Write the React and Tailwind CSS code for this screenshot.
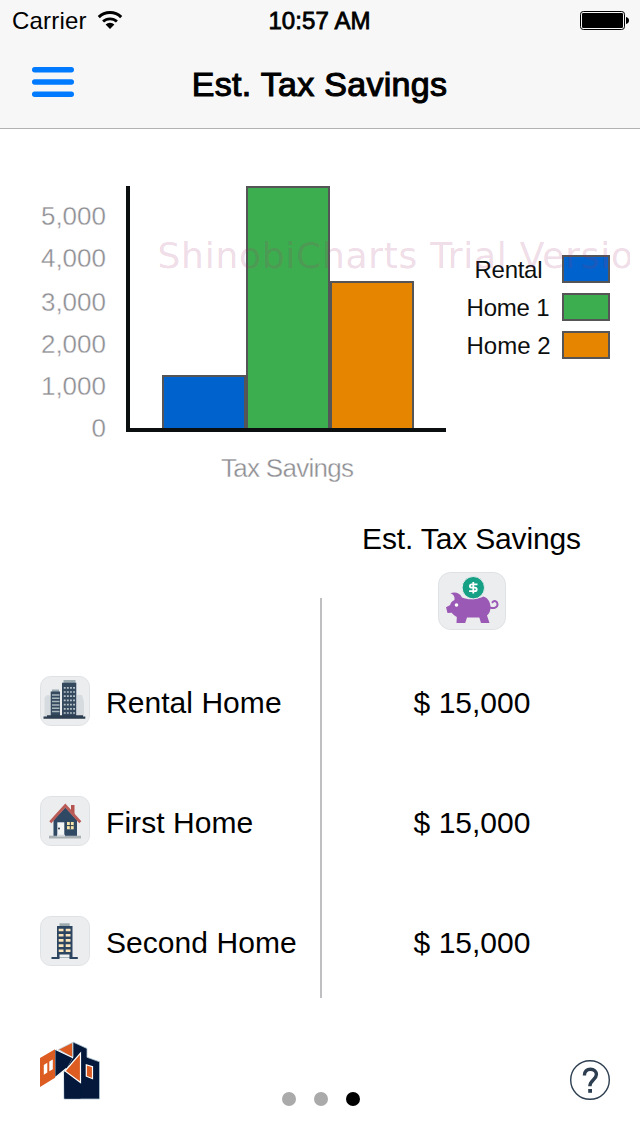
const series = [
  { name: 'Rental', fill: '#0062cc', x: 163, top: 376, legendX: 475, legendW: 68 },
  { name: 'Home 1', fill: '#3dae4f', x: 247, top: 187, legendX: 467, legendW: 83 },
  { name: 'Home 2', fill: '#e68600', x: 331, top: 282, legendX: 467, legendW: 84 },
];

const ticks = [
  ['5,000', 225],
  ['4,000', 267],
  ['3,000', 311],
  ['2,000', 353],
  ['1,000', 395],
  ['0', 437],
];

function WifiIcon() {
  return (
    <svg className="ml-[10px] mt-[10px] h-[20px] w-[26px]" viewBox="0 0 26 20" fill="none" stroke="#000" strokeWidth="3">
      <path d="M1.8 7.1a16 16 0 0 1 22.4 0" />
      <path d="M6.1 11.6a9.9 9.9 0 0 1 13.8 0" strokeWidth="2.8" />
      <path d="M8.6 14.6a6.3 6.3 0 0 1 8.8 0L13 19.1z" fill="#000" stroke="none" />
    </svg>
  );
}

function BatteryIcon() {
  return (
    <svg className="mt-[11px] h-[19px] w-[49px]" viewBox="0 0 49 19">
      <rect x="0.5" y="0.5" width="44" height="18" rx="2.8" fill="none" stroke="#000" />
      <rect x="2" y="2" width="41" height="15" rx="1.2" />
      <path d="M46 6c2 .3 3 1.600 3 3.500s-1 3.200-3 3.500z" />
    </svg>
  );
}

function MenuIcon() {
  return (
    <svg className="h-[31px] w-[42px]" viewBox="0 0 42 31" fill="#007aff">
      <rect y="0" width="42" height="5.500" rx="2.700" />
      <rect y="12.200" width="42" height="5.500" rx="2.700" />
      <rect y="24.500" width="42" height="5.500" rx="2.700" />
    </svg>
  );
}

function Chart() {
  return (
    <svg className="block h-[371px] w-[640px]" viewBox="0 129 640 371">
      <g fill="#8e8e93" stroke="#fff" strokeWidth="0.35" fontSize="26">
        {ticks.map(([label, y]) => (
          <text key={label} x="106" y={y} textAnchor="end">{label}</text>
        ))}
        <text x="221" y="477" textLength="133">Tax Savings</text>
      </g>
      {series.map((s) => (
        <rect key={s.name} x={s.x} y={s.top} width="82" height={430 - s.top} fill={s.fill} stroke="#555557" strokeWidth="2" />
      ))}
      <path d="M128 186v244h318" fill="none" stroke="#0c0f0f" strokeWidth="4" />
      {series.map((s, i) => (
        <g key={s.name}>
          <text x={s.legendX - 0.5} y={278 + i * 38} fontSize="24" fill="#0c0f0f" textLength={s.legendW}>{s.name}</text>
          <rect x="563" y={256 + i * 38} width="46" height="26" fill={s.fill} stroke="#555557" strokeWidth="2" />
        </g>
      ))}
      <clipPath id="watermark"><rect x="150" y="230" width="480" height="60" /></clipPath>
      <g clipPath="url(#watermark)">
        <text x="157.500" y="268" fontSize="36" fill="#a02f70" fillOpacity="0.18" style={{ fontFamily: '"DejaVu Sans", sans-serif' }} textLength="499">ShinobiCharts Trial Version</text>
      </g>
    </svg>
  );
}

function PiggyIcon() {
  return (
    <svg className="h-[58px] w-[68px]" viewBox="0 0 68 58">
      <rect x="0.500" y="0.500" width="67" height="57" rx="12" fill="#ebedef" stroke="#dfe2e4" />
      <path d="M12.500 21.300C17 19.500 22 21 24 25.500C31 28.500 39 27.500 45.500 24.500C50 26 52.500 30 52.500 35.500C52.500 39 51 42 49 43.500L51.500 51H43L41.300 45.500H29L27.200 51H18.500L18.800 45C16.500 44 15 42.500 13.800 40.800L9.500 41L8 35.200L12.200 33C12.500 31 13.700 29.300 16.500 28C17 24.500 15.500 22.500 12.500 21.300z" fill="#9b59b6" />
      <path d="M52 35.500c4 1.500 7.500 0 7.500-3.200s-3.500-4.300-5-2" fill="none" stroke="#9b59b6" strokeWidth="2" strokeLinecap="round" />
      <circle cx="18.500" cy="33" r="1.800" fill="#fff" />
      <circle cx="35.300" cy="15.700" r="11.200" fill="#16a085" stroke="#ebedef" />
      <path d="M39.500 12.300h-5.700q-1.900 0-1.900 1.700t1.900 1.700h3q1.900 0 1.900 1.700t-1.900 1.700h-5.700M35.300 10v11.500" fill="none" stroke="#fff" strokeWidth="1.800" />
    </svg>
  );
}

function TowersIcon() {
  return (
    <>
      <path d="M4.500 22q2-5 6 -2v21H4.500zM37 19h5l2 7v14h-7z" fill="#d6dbdf" />
      <path d="M12 13.500h7V16h-7zM23.500 4H35.500v3h-12z" fill="#9aaab0" />
      <path d="M10.700 15.500h9.300V41h-9.300zM22 6.700h14.300V41H22z" fill="#34495e" />
      <path d="M12 19h7.500M12 22.300h7.500M12 25.600h7.500M12 28.900h7.500M12 32.200h7.500M12 35.500h7.500" stroke="#a9b7bd" strokeWidth="1.500" />
      <path d="M23.800 11.800h11.500M23.800 16h11.500M23.800 20.200h11.500M23.800 24.400h11.500M23.800 28.600h11.500M23.800 32.800h11.500M23.800 37h11.500" stroke="#b4c0c6" strokeWidth="1.700" strokeDasharray="1.900 1.200" />
      <path d="M7 39.200h36v1.300h2.300v2.200H3.500v-2.200H7z" fill="#2c3e50" />
    </>
  );
}

function HouseIcon() {
  return (
    <>
      <path d="M31 9h3.500v10L31 16z" fill="#b5534f" />
      <path d="M13.500 24L25.300 11.500 37 24v16.500H13.500z" fill="#2f4863" />
      <path d="M10.300 26.300L25.300 9.500l15 16.800" fill="none" stroke="#b95c58" strokeWidth="2.800" />
      <path d="M17.300 26.300h7v13.500h-7z" fill="#f4f5f5" />
      <circle cx="19" cy="32.500" r="1" fill="#26394b" />
      <path d="M27 26h6.700v7.300H27z" fill="#f7e5ac" />
      <path d="M30.300 26v7.300M27 29.600h6.700" stroke="#26394b" />
      <path d="M9 39.700h32v2.800H9z" fill="#a8b0b4" />
      <path d="M17 38.700h8v2h-8z" fill="#d6dadd" />
    </>
  );
}

function ApartmentIcon() {
  return (
    <>
      <path d="M19.500 7.300h10.200v3H19.500z" fill="#9daaad" />
      <path d="M17 10h15.500v31.700H17z" fill="#2c4560" />
      <path d="M18.700 14h12M18.700 19.200h12M18.700 24.400h12M18.700 29.600h12M18.700 34.800h12" stroke="#fbe4b8" strokeWidth="2.600" strokeDasharray="4.800 2.200" />
      <path d="M19.500 38.500h10v3h-10z" fill="#edf0f1" />
      <path d="M11.500 41h8v2h-8zM29.500 41h8.300v2h-8.300z" fill="#2c4560" />
    </>
  );
}

function HomeRow({ label, value, children }) {
  return (
    <div className="flex h-[120px] items-center">
      <div className="flex w-[320px] items-center pl-10">
        <svg className="h-[50px] w-[50px]" viewBox="0 0 50 50">
          <rect x="0.500" y="0.500" width="49" height="49" rx="10" fill="#ebedef" stroke="#dfe2e4" />
          {children}
        </svg>
        <span className="ml-4 whitespace-nowrap pt-1 text-[30px] leading-9 tracking-[0.05px]">{label}</span>
      </div>
      <span className="w-[304px] pt-1 text-center text-[30px] leading-9">{value}</span>
    </div>
  );
}

function Logo() {
  return (
    <svg className="h-[60px] w-[62px]" viewBox="0 0 62 60">
      <path d="M33 1l14 6.500v8.800l12.500 4.500V58H24V31l9-15z" fill="#03183a" stroke="#afc5d2" strokeWidth=".8" />
      <path d="M24 32l1-2 15.500 12V57.500H24.500z" fill="#03183a" />
      <path d="M18.500 8.500L32.500 1.500v15z" fill="#dc5c21" stroke="#bdd0dc" strokeWidth=".8" />
      <path d="M15.300 8L32.800 16.500 26 28.500 15.300 36.500z" fill="#03183a" />
      <path d="M0 17L15 8.300v28.400L0 46z" fill="#dc5c21" />
      <path d="M3.800 24l3.500-2.200v9.800l-3.500 2.200zM9.300 20.500l3.500-2v9.800l-3.500 2z" fill="#fff" />
      <path d="M15.300 36.500l11-9M15 8.200L33 16.800" fill="none" stroke="#fff" strokeWidth="1.200" />
      <path d="M40.500 12v29.500L25 30z" fill="#dc5c21" stroke="#fff" strokeWidth="1.200" />
      <path d="M46.300 23.700l6.200 2v12l-6.200-2.500z" fill="#dc5c21" stroke="#fff" strokeWidth="1.200" />
    </svg>
  );
}

function HelpIcon() {
  return (
    <svg className="h-[40px] w-[40px]" viewBox="0 0 40 40" fill="none" stroke="#2c3e50">
      <circle cx="20" cy="20" r="19.300" strokeWidth="1.400" />
      <path d="M14.400 15.500c0-4.200 2.500-6.300 6-6.300 3.700 0 6 2.200 6 5.300 0 5-6.500 5.500-6.500 11.700" strokeWidth="3.400" />
      <path d="M18.200 29h3.800v3.800h-3.800z" fill="#2c3e50" stroke="none" />
    </svg>
  );
}

export default function App() {
  return (
    <div className="flex h-[1136px] w-[640px] flex-col overflow-hidden bg-white font-['Liberation_Sans',Arial,sans-serif] text-black">
      <header className="h-[129px] border-b border-[#b2b2b2] bg-[#f7f7f8]">
        <div className="grid h-10 grid-cols-3">
          <div className="flex pl-3">
            <span className="mt-[7px] text-[24px] leading-7 tracking-[0.2px]">Carrier</span>
            <WifiIcon />
          </div>
          <span className="mt-[7px] whitespace-nowrap pr-px text-center text-[24px] leading-7 tracking-[0.1px] [-webkit-text-stroke:0.8px_#000]">10:57 AM</span>
          <div className="flex justify-end pr-[11px]">
            <BatteryIcon />
          </div>
        </div>
        <div className="grid h-[88px] grid-cols-[160px_320px_160px]">
          <div className="pl-8 pt-[27px]"><MenuIcon /></div>
          <h1 className="pr-px pt-[24px] text-center text-[34px] leading-10 font-normal tracking-[0.3px] [-webkit-text-stroke:1.1px_#000]">Est. Tax Savings</h1>
        </div>
      </header>

      <Chart />

      <main className="relative h-[502px]">
        <div className="flex flex-col items-center pl-[304px] pt-[21px]">
          <h2 className="pr-px text-[30px] leading-9 tracking-[-0.15px]">Est. Tax Savings</h2>
          <div className="mt-[15px]"><PiggyIcon /></div>
        </div>
        <div className="pt-[11px]">
          <HomeRow label="Rental Home" value="$ 15,000"><TowersIcon /></HomeRow>
          <HomeRow label="First Home" value="$ 15,000"><HouseIcon /></HomeRow>
          <HomeRow label="Second Home" value="$ 15,000"><ApartmentIcon /></HomeRow>
        </div>
        <div className="absolute left-[320px] top-[98px] h-[400px] w-[2px] bg-[#bfbfc2]" />
      </main>

      <footer className="grid h-[134px] grid-cols-3 px-[30px] pt-[38px]">
        <div className="pl-[10px] pt-px"><Logo /></div>
        <div className="flex justify-center gap-[18px] pt-[52px] pl-[2px]">
          <i className="h-[14px] w-[14px] rounded-full bg-[#aaa]" />
          <i className="h-[14px] w-[14px] rounded-full bg-[#aaa]" />
          <i className="h-[14px] w-[14px] rounded-full bg-black" />
        </div>
        <div className="flex justify-end pt-[20px]"><HelpIcon /></div>
      </footer>
    </div>
  );
}
